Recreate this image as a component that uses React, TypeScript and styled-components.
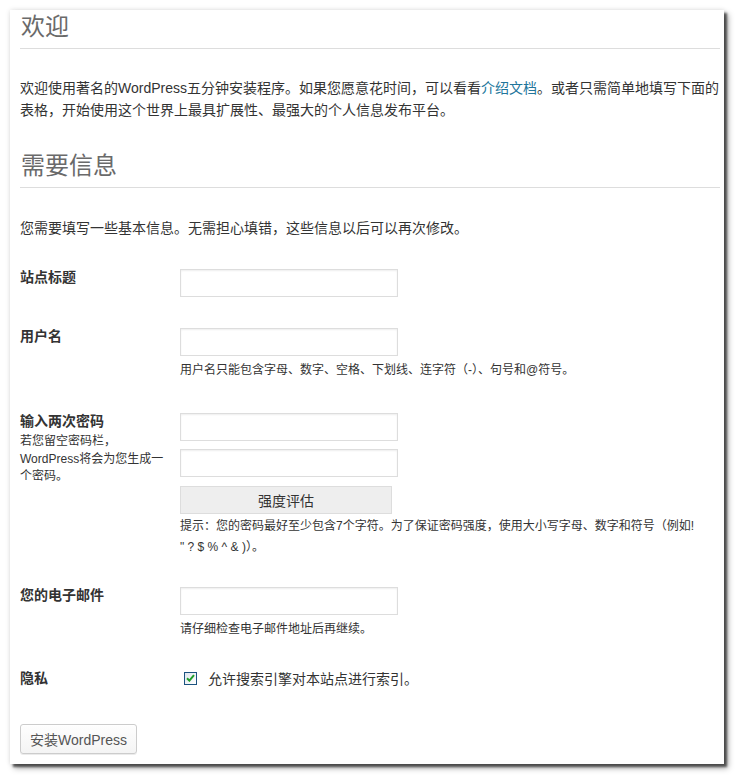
import React from "react";
import styled, { createGlobalStyle } from "styled-components";

const GlobalStyle = createGlobalStyle`
  html, body {
    margin: 0;
    padding: 0;
    background: #ffffff;
  }
  body {
    min-height: 778px;
    font-family: "Liberation Sans", "Noto Sans CJK SC", sans-serif;
    color: #333333;
  }
`;

const Page = styled.div`
  padding: 10px 0 12px 10px;
`;

const Card = styled.div`
  box-sizing: border-box;
  width: 714px;
  background: #ffffff;
  padding: 2px 4px 10px 10px;
  box-shadow: 0 0 5px rgba(0, 0, 0, 0.12), 3px 3px 2px rgba(0, 0, 0, 0.55),
    4px 4px 6px rgba(0, 0, 0, 0.35);
  display: flex;
  flex-direction: column;
`;

const Heading = styled.h1<{ $mt?: number }>`
  margin: ${(p) => p.$mt ?? 0}px 0 0 0;
  padding: 0 0 6px 1px;
  font-size: 24px;
  line-height: 30px;
  font-weight: normal;
  color: #6a6a6a;
  border-bottom: 1px solid #dddddd;
`;

const Para = styled.p<{ $mt: number }>`
  margin: ${(p) => p.$mt}px 0 0 0;
  font-size: 14px;
  line-height: 22px;
  color: #333333;
`;

const Link = styled.a`
  color: #21759b;
  text-decoration: none;
`;

const Row = styled.div<{ $mt: number }>`
  margin-top: ${(p) => p.$mt}px;
  display: grid;
  grid-template-columns: 160px 1fr;
  align-items: start;
`;

const LabelCol = styled.div`
  display: flex;
  flex-direction: column;
`;

const Label = styled.label`
  font-size: 14px;
  line-height: 16px;
  font-weight: bold;
  color: #333333;
`;

const LabelNote = styled.div`
  margin-top: 4px;
  width: 148px;
  font-size: 12px;
  line-height: 17.5px;
  color: #333333;
`;

const FieldCol = styled.div`
  display: flex;
  flex-direction: column;
  align-items: flex-start;
`;

const TextInput = styled.input<{ $mt?: number }>`
  display: block;
  box-sizing: border-box;
  margin: ${(p) => p.$mt ?? 0}px 0 0 0;
  width: 218px;
  height: 28px;
  border: 1px solid #dddddd;
  box-shadow: inset 0 1px 2px rgba(0, 0, 0, 0.07);
  background: #ffffff;
  padding: 3px 5px;
  font-size: 14px;
  outline: none;
`;

const StrengthBox = styled.div`
  box-sizing: border-box;
  margin-top: 9px;
  width: 212px;
  height: 28px;
  background: #eeeeee;
  border: 1px solid #dddddd;
  display: flex;
  align-items: center;
  justify-content: center;
  font-size: 14px;
  color: #333333;
`;

const Desc = styled.p<{ $mt?: number }>`
  margin: ${(p) => p.$mt ?? 4}px 0 0 0;
  font-size: 12px;
  line-height: 21px;
  color: #333333;
`;

const CheckLine = styled.label`
  display: flex;
  align-items: center;
  gap: 11px;
  height: 16px;
  padding-left: 4px;
  font-size: 14px;
  color: #333333;
`;

const CheckBox = styled.span`
  box-sizing: border-box;
  width: 13px;
  height: 13px;
  border: 1px solid #1c5380;
  background: linear-gradient(135deg, #dfe6ee 0%, #ffffff 100%);
  display: flex;
  align-items: center;
  justify-content: center;
`;

const Submit = styled.button`
  box-sizing: border-box;
  margin-top: 38px;
  align-self: flex-start;
  width: 117px;
  height: 30px;
  border: 1px solid #cccccc;
  border-radius: 3px;
  background: linear-gradient(#fefefe, #f4f4f4);
  box-shadow: inset 0 1px 0 #ffffff, 0 1px 0 rgba(0, 0, 0, 0.08);
  font-family: "Liberation Sans", "Noto Sans CJK SC", sans-serif;
  font-size: 14px;
  color: #555555;
  padding: 0;
`;

export default function App() {
  return (
    <Page>
      <GlobalStyle />
      <Card>
        <Heading>欢迎</Heading>
        <Para $mt={28}>
          欢迎使用著名的WordPress五分钟安装程序。如果您愿意花时间，可以看看
          <Link href="#">介绍文档</Link>
          。或者只需简单地填写下面的表格，开始使用这个世界上最具扩展性、最强大的个人信息发布平台。
        </Para>
        <Heading $mt={30}>需要信息</Heading>
        <Para $mt={29}>您需要填写一些基本信息。无需担心填错，这些信息以后可以再次修改。</Para>

        <Row $mt={30}>
          <LabelCol>
            <Label>站点标题</Label>
          </LabelCol>
          <FieldCol>
            <TextInput type="text" />
          </FieldCol>
        </Row>

        <Row $mt={31}>
          <LabelCol>
            <Label>用户名</Label>
          </LabelCol>
          <FieldCol>
            <TextInput type="text" />
            <Desc>用户名只能包含字母、数字、空格、下划线、连字符（-）、句号和@符号。</Desc>
          </FieldCol>
        </Row>

        <Row $mt={32}>
          <LabelCol>
            <Label>输入两次密码</Label>
            <LabelNote>若您留空密码栏，WordPress将会为您生成一个密码。</LabelNote>
          </LabelCol>
          <FieldCol>
            <TextInput type="password" />
            <TextInput type="password" $mt={8} />
            <StrengthBox>强度评估</StrengthBox>
            <Desc $mt={2}>
              提示：您的密码最好至少包含7个字符。为了保证密码强度，使用大小写字母、数字和符号（例如!
              <br />" ? $ % ^ &amp; )）。
            </Desc>
          </FieldCol>
        </Row>

        <Row $mt={29}>
          <LabelCol>
            <Label>您的电子邮件</Label>
          </LabelCol>
          <FieldCol>
            <TextInput type="text" />
            <Desc>请仔细检查电子邮件地址后再继续。</Desc>
          </FieldCol>
        </Row>

        <Row $mt={30}>
          <LabelCol>
            <Label>隐私</Label>
          </LabelCol>
          <FieldCol>
            <CheckLine>
              <CheckBox>
                <svg width="9" height="8" viewBox="0 0 9 8">
                  <path d="M1 4.2 L3.4 6.6 L8 1.2" fill="none" stroke="#1f9e2a" strokeWidth="2" />
                </svg>
              </CheckBox>
              允许搜索引擎对本站点进行索引。
            </CheckLine>
          </FieldCol>
        </Row>

        <Submit type="button">安装WordPress</Submit>
      </Card>
    </Page>
  );
}
